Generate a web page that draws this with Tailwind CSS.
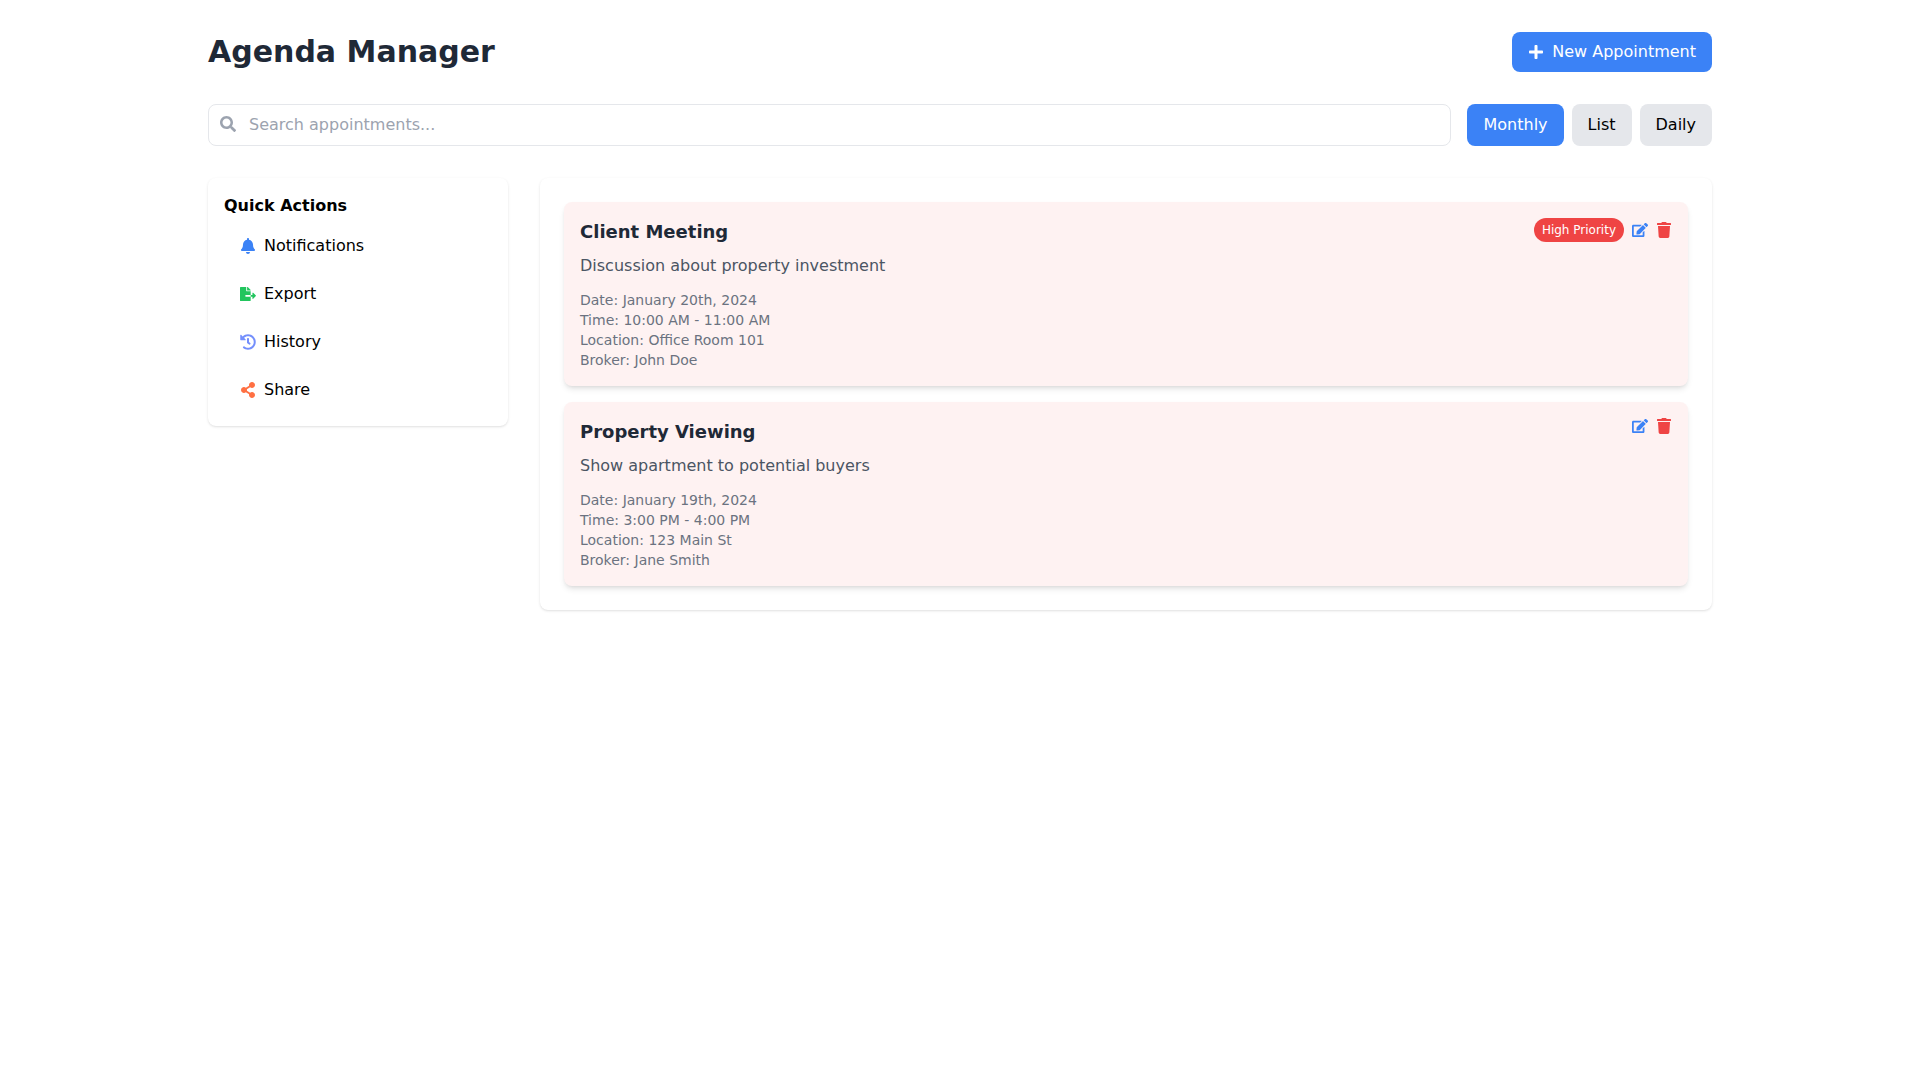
<!DOCTYPE html>
<html lang="en">
<head>
<meta charset="utf-8">
<meta name="viewport" content="width=device-width, initial-scale=1">
<title>Agenda Manager</title>
<script src="https://cdn.jsdelivr.net/npm/@tailwindcss/browser@4"></script>
</head>
<body class="bg-white text-black font-['DejaVu_Sans',sans-serif]">
<svg class="hidden" aria-hidden="true">
  <symbol id="plus" viewBox="0 0 448 512"><path d="M416 208H272V64c0-17.67-14.33-32-32-32h-32c-17.67 0-32 14.33-32 32v144H32c-17.67 0-32 14.33-32 32v32c0 17.67 14.33 32 32 32h144v144c0 17.67 14.33 32 32 32h32c17.67 0 32-14.33 32-32V304h144c17.67 0 32-14.33 32-32v-32c0-17.67-14.33-32-32-32z"/></symbol>
  <symbol id="search" viewBox="0 0 512 512"><path d="M505 442.7L405.3 343c-4.5-4.5-10.6-7-17-7H372c27.6-35.3 44-79.7 44-128C416 93.1 322.9 0 208 0S0 93.1 0 208s93.1 208 208 208c48.3 0 92.7-16.4 128-44v16.3c0 6.4 2.5 12.5 7 17l99.7 99.7c9.4 9.4 24.6 9.4 33.9 0l28.3-28.3c9.4-9.4 9.4-24.6.1-34zM208 336c-70.7 0-128-57.2-128-128 0-70.7 57.2-128 128-128 70.7 0 128 57.2 128 128 0 70.7-57.2 128-128 128z"/></symbol>
  <symbol id="bell" viewBox="0 0 448 512"><path d="M224 512c35.32 0 63.97-28.65 63.97-64H160.03c0 35.35 28.65 64 63.97 64zm215.39-149.71c-19.32-20.76-55.47-51.99-55.47-154.29 0-77.7-54.48-139.9-127.94-155.16V32c0-17.67-14.32-32-31.98-32s-31.98 14.33-31.98 32v20.84C118.56 68.1 64.08 130.3 64.08 208c0 102.3-36.15 133.53-55.47 154.29-6 6.45-8.66 14.16-8.61 21.71.11 16.4 12.98 32 32.1 32h383.8c19.12 0 32-15.6 32.1-32 .05-7.55-2.61-15.27-8.61-21.71z"/></symbol>
  <symbol id="export" viewBox="0 0 576 512"><path d="M384 121.9c0-6.3-2.5-12.4-7-16.9L279.1 7c-4.5-4.5-10.6-7-17-7H256v128h128zM571 308l-95.7-96.4c-10.1-10.1-27.4-3-27.4 11.3V288h-64v64h64v65.2c0 14.3 17.3 21.4 27.4 11.3L571 332c6.6-6.6 6.6-17.4 0-24zm-379 28v-32c0-8.8 7.2-16 16-16h176V160H248c-13.2 0-24-10.8-24-24V0H24C10.7 0 0 10.7 0 24v464c0 13.3 10.7 24 24 24h336c13.3 0 24-10.7 24-24V352H208c-8.8 0-16-7.2-16-16z"/></symbol>
  <symbol id="history" viewBox="0 0 512 512"><path d="M504 255.531c.253 136.64-111.18 248.372-247.82 248.468-59.015.042-113.223-20.53-155.822-54.911-11.077-8.94-11.905-25.541-1.839-35.607l11.267-11.267c8.609-8.609 22.353-9.551 31.891-1.984C173.062 425.135 212.781 440 256 440c101.705 0 184-82.311 184-184 0-101.705-82.311-184-184-184-48.814 0-93.149 18.969-126.068 49.932l50.754 50.754c10.08 10.08 2.941 27.314-11.313 27.314H24c-8.837 0-16-7.163-16-16V38.627c0-14.254 17.234-21.393 27.314-11.314l49.372 49.372C129.209 34.136 189.552 8 256 8c136.81 0 247.747 110.78 248 247.531zm-180.912 78.784l9.823-12.63c8.138-10.463 6.253-25.542-4.21-33.679L288 256.349V152c0-13.255-10.745-24-24-24h-16c-13.255 0-24 10.745-24 24v135.651l65.409 50.874c10.463 8.137 25.541 6.253 33.679-4.21z"/></symbol>
  <symbol id="share" viewBox="0 0 448 512"><path d="M352 320c-22.608 0-43.387 7.819-59.79 20.895l-102.486-64.054a96.551 96.551 0 0 0 0-41.683l102.486-64.054C308.613 184.181 329.392 192 352 192c53.019 0 96-42.981 96-96S405.019 0 352 0s-96 42.981-96 96c0 7.158.79 14.13 2.276 20.841L155.79 180.895C139.387 167.819 118.608 160 96 160c-53.019 0-96 42.981-96 96s42.981 96 96 96c22.608 0 43.387-7.819 59.79-20.895l102.486 64.054A96.301 96.301 0 0 0 256 416c0 53.019 42.981 96 96 96s96-42.981 96-96-42.981-96-96-96z"/></symbol>
  <symbol id="edit" viewBox="0 0 576 512"><path d="M402.6 83.2l90.2 90.2c3.8 3.8 3.8 10 0 13.8L274.4 405.6l-92.8 10.3c-12.4 1.4-22.9-9.1-21.5-21.5l10.3-92.8L388.8 83.2c3.8-3.8 10-3.8 13.8 0zm162-22.9l-48.8-48.8c-15.2-15.2-39.9-15.2-55.2 0l-35.4 35.4c-3.8 3.8-3.8 10 0 13.8l90.2 90.2c3.8 3.8 10 3.8 13.8 0l35.4-35.4c15.2-15.3 15.2-40 0-55.2zM384 346.2V448H64V128h229.8c3.2 0 6.2-1.3 8.5-3.5l40-40c7.6-7.6 2.2-20.5-8.5-20.5H48C21.5 64 0 85.5 0 112v352c0 26.5 21.5 48 48 48h352c26.5 0 48-21.5 48-48V306.2c0-10.7-12.9-16-20.5-8.5l-40 40c-2.2 2.3-3.5 5.3-3.5 8.5z"/></symbol>
  <symbol id="trash" viewBox="0 0 448 512"><path d="M432 32H312l-9.4-18.7A24 24 0 0 0 281.1 0H166.8a23.72 23.72 0 0 0-21.4 13.3L136 32H16A16 16 0 0 0 0 48v32a16 16 0 0 0 16 16h416a16 16 0 0 0 16-16V48a16 16 0 0 0-16-16zM53.2 467a48 48 0 0 0 47.9 45h245.8a48 48 0 0 0 47.9-45L416 128H32z"/></symbol>
</svg>
<div class="mx-auto max-w-[1536px] px-4 py-8">
  <header class="mb-8 flex items-center justify-between">
    <h1 class="text-3xl leading-9 font-bold text-[#1f2937]">Agenda Manager</h1>
    <button type="button" class="flex items-center gap-2 rounded-lg bg-[#3b82f6] px-4 py-2 text-white"><svg class="size-4 fill-current" aria-hidden="true"><use href="#plus"/></svg>New Appointment</button>
  </header>

  <div class="mb-8 flex gap-4">
    <div class="relative grow">
      <svg class="absolute top-3 left-3 size-4 fill-[#9ca3af]" aria-hidden="true"><use href="#search"/></svg>
      <input type="text" aria-label="Search appointments" placeholder="Search appointments..." class="w-full rounded-lg border border-[#e5e7eb] py-2 pr-4 pl-10 placeholder:text-[#9ca3af]">
    </div>
    <div class="flex gap-2">
      <button type="button" class="rounded-lg bg-[#3b82f6] px-4 py-2 text-white">Monthly</button>
      <button type="button" class="rounded-lg bg-[#e5e7eb] px-4 py-2">List</button>
      <button type="button" class="rounded-lg bg-[#e5e7eb] px-4 py-2">Daily</button>
    </div>
  </div>

  <div class="flex items-start gap-8">
    <aside class="w-[300px] shrink-0 rounded-lg bg-white p-4 shadow-sm">
      <h2 class="mb-2 font-bold">Quick Actions</h2>
      <div class="flex flex-col gap-2">
        <button type="button" class="flex items-center gap-2 rounded-lg px-4 py-2"><svg class="size-4 fill-[#3b82f6]" aria-hidden="true"><use href="#bell"/></svg>Notifications</button>
        <button type="button" class="flex items-center gap-2 rounded-lg px-4 py-2"><svg class="size-4 fill-[#22c55e]" aria-hidden="true"><use href="#export"/></svg>Export</button>
        <button type="button" class="flex items-center gap-2 rounded-lg px-4 py-2"><svg class="size-4 fill-[#748ffc]" aria-hidden="true"><use href="#history"/></svg>History</button>
        <button type="button" class="flex items-center gap-2 rounded-lg px-4 py-2"><svg class="size-4 fill-[#ff7043]" aria-hidden="true"><use href="#share"/></svg>Share</button>
      </div>
    </aside>

    <main class="grow rounded-lg bg-white p-6 shadow-sm">
      <div class="flex flex-col gap-4">
        <article class="flex items-start justify-between rounded-lg bg-[#fef2f2] p-4 shadow-md">
          <div>
            <h3 class="text-lg leading-7 font-bold text-[#1f2937]">Client Meeting</h3>
            <p class="mt-2 text-[#4b5563]">Discussion about property investment</p>
            <div class="mt-3 text-sm leading-5 text-[#6b7280]">
              <p>Date: January 20th, 2024</p>
              <p>Time: 10:00 AM - 11:00 AM</p>
              <p>Location: Office Room 101</p>
              <p>Broker: John Doe</p>
            </div>
          </div>
          <div class="flex items-center gap-2">
            <span class="rounded-full bg-[#ef4444] px-2 py-1 text-xs leading-4 text-white">High Priority</span>
            <button type="button" aria-label="Edit Client Meeting"><svg class="size-4 fill-[#3b82f6]" aria-hidden="true"><use href="#edit"/></svg></button>
            <button type="button" aria-label="Delete Client Meeting"><svg class="size-4 fill-[#ef4444]" aria-hidden="true"><use href="#trash"/></svg></button>
          </div>
        </article>
        <article class="flex items-start justify-between rounded-lg bg-[#fef2f2] p-4 shadow-md">
          <div>
            <h3 class="text-lg leading-7 font-bold text-[#1f2937]">Property Viewing</h3>
            <p class="mt-2 text-[#4b5563]">Show apartment to potential buyers</p>
            <div class="mt-3 text-sm leading-5 text-[#6b7280]">
              <p>Date: January 19th, 2024</p>
              <p>Time: 3:00 PM - 4:00 PM</p>
              <p>Location: 123 Main St</p>
              <p>Broker: Jane Smith</p>
            </div>
          </div>
          <div class="flex items-center gap-2">
            <button type="button" aria-label="Edit Property Viewing"><svg class="size-4 fill-[#3b82f6]" aria-hidden="true"><use href="#edit"/></svg></button>
            <button type="button" aria-label="Delete Property Viewing"><svg class="size-4 fill-[#ef4444]" aria-hidden="true"><use href="#trash"/></svg></button>
          </div>
        </article>
      </div>
    </main>
  </div>
</div>
</body>
</html>
